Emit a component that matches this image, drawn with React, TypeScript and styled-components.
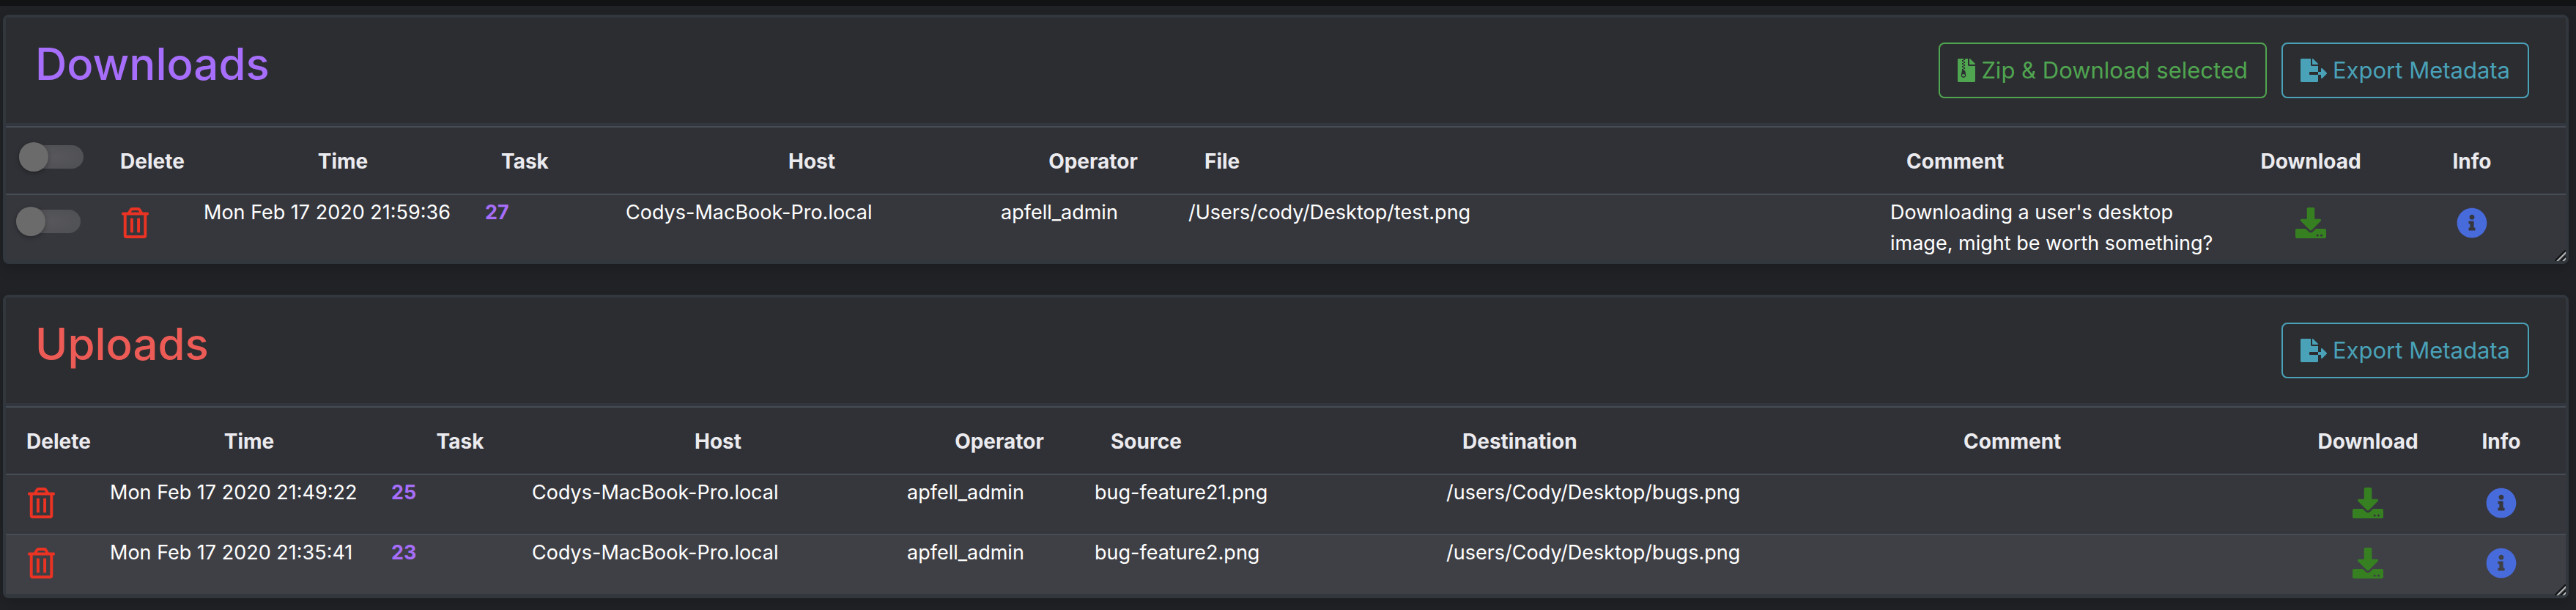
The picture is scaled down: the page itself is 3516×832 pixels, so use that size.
import React from "react";
import styled, { createGlobalStyle } from "styled-components";
import { FaDownload, FaFileArchive, FaFileExport, FaInfoCircle, FaRegTrashAlt } from "react-icons/fa";

const GlobalStyle = createGlobalStyle`
  *, *::before, *::after { box-sizing: border-box; }
  body {
    margin: 0;
    background: #202225;
    color: #fff;
    font-family: Inter, "Liberation Sans", sans-serif;
    font-size: 27px;
    line-height: 42px;
  }
`;

const TopStrip = styled.div`
  height: 8px;
  background: #121315;
`;

const Page = styled.main`
  display: flex;
  flex-direction: column;
  gap: 42px;
  padding: 12px 10px 16px 4px;
`;

const Card = styled.section`
  position: relative;
  padding-bottom: 2px;
  border: 4px solid #32373e;
  border-radius: 8px;
  background: #32383c;
  box-shadow: 0 8px 16px rgba(0, 0, 0, 0.15);
`;

const CardHeader = styled.header`
  display: flex;
  align-items: flex-start;
  justify-content: space-between;
  padding: 34px 50px 34px 40px;
  border-bottom: 4px solid #32373f;
  background: #2c2d31;
`;

const Title = styled.h1<{ $color: string }>`
  margin: 0;
  color: ${(p) => p.$color};
  font-size: 60px;
  font-weight: 500;
  line-height: 58px;
`;

const Actions = styled.div`
  display: flex;
  gap: 20px;
`;

const OutlineButton = styled.button<{ $color: string; $iconWidth: number }>`
  display: flex;
  align-items: center;
  gap: 8px;
  height: 76px;
  padding: 0 24px;
  border: 2px solid ${(p) => p.$color};
  border-radius: 8px;
  background: transparent;
  color: ${(p) => p.$color};
  font: inherit;
  font-size: 31px;
  white-space: nowrap;
  cursor: pointer;

  svg {
    width: ${(p) => p.$iconWidth}px;
    height: 32px;
  }
`;

const Table = styled.table`
  width: 100%;
  table-layout: fixed;
  border-collapse: separate;
  border-spacing: 0;
`;

const Col = styled.col<{ $width?: number }>`
  width: ${(p) => (p.$width ? `${p.$width}px` : "auto")};
`;

const HeadCell = styled.th<{ $align?: "left" | "center" }>`
  height: 92px;
  padding: ${(p) => (p.$align === "left" ? "2px 20px 0 28px" : "2px 12px 0 20px")};
  border-top: 2px solid #454b53;
  background: #303136;
  color: #ebebef;
  font-size: 28px;
  font-weight: 700;
  text-align: ${(p) => p.$align ?? "center"};
`;

const ToggleHeadCell = styled(HeadCell)`
  padding: 0 0 10px 18px;
  text-align: left;
`;

const Row = styled.tr`
  background: #36373d;

  &:nth-child(even) {
    background: #3f4046;
  }
`;

const Cell = styled.td`
  padding: 3px 6px 1px;
  border-top: 2px solid #454d55;
  vertical-align: top;
`;

const CommentCell = styled(Cell)`
  padding-right: 32px;
`;

const ToggleCell = styled(Cell)`
  padding: 16px 0 0 14px;
`;

const IconCell = styled(Cell)`
  padding: 3px 20px 1px 28px;
  text-align: center;
`;

const DeleteCell = styled(Cell)`
  padding-left: 30px;
`;

const IconButton = styled.button<{ $color: string; $iconWidth: number }>`
  display: inline-block;
  padding: 14px 0 20px;
  border: 0;
  background: none;
  color: ${(p) => p.$color};
  line-height: 0;
  vertical-align: top;
  cursor: pointer;

  svg {
    width: ${(p) => p.$iconWidth}px;
    height: 42px;
  }
`;

const TaskLink = styled.a`
  color: #a66efa;
  font-weight: 700;
  text-decoration: none;
`;

const Toggle = styled.input`
  appearance: none;
  display: grid;
  align-items: center;
  width: 88px;
  height: 40px;
  margin: 0;
  cursor: pointer;

  &::before,
  &::after {
    content: "";
    grid-area: 1 / 1;
  }

  &::before {
    height: 32px;
    border-radius: 16px;
    background: radial-gradient(ellipse at center, #58585c, #4e4f53);
  }

  &::after {
    width: 40px;
    height: 40px;
    border-radius: 50%;
    background: #6b6b6b;
    box-shadow: 0 2px 6px rgba(0, 0, 0, 0.3);
  }

  &:checked::after {
    justify-self: end;
  }
`;

const Grip = styled.svg`
  position: absolute;
  right: 0;
  bottom: 0;
  width: 15px;
  height: 15px;
`;

const ResizeGrip = () => (
  <Grip viewBox="0 0 15 15" aria-hidden="true">
    <path d="M0.5 15L15 0.5M8.5 15L15 8.5" stroke="#111214" strokeWidth="2.4" />
    <path d="M3 15.5L15.5 3M11 15.5L15.5 11" stroke="#b9b9b9" strokeWidth="2" />
  </Grip>
);

const ExportButton = () => (
  <OutlineButton type="button" $color="#49a2b8" $iconWidth={36}>
    <FaFileExport />
    Export Metadata
  </OutlineButton>
);

const DeleteButton = () => (
  <IconButton type="button" $color="#ea3323" $iconWidth={37} aria-label="Delete">
    <FaRegTrashAlt />
  </IconButton>
);

const DownloadButton = () => (
  <IconButton type="button" $color="#368021" $iconWidth={42} aria-label="Download">
    <FaDownload />
  </IconButton>
);

const InfoButton = () => (
  <IconButton type="button" $color="#486bdb" $iconWidth={42} aria-label="Info">
    <FaInfoCircle />
  </IconButton>
);

const downloads = [
  {
    time: "Mon Feb 17 2020 21:59:36",
    task: 27,
    host: "Codys-MacBook-Pro.local",
    operator: "apfell_admin",
    file: "/Users/cody/Desktop/test.png",
    comment: "Downloading a user's desktop image, might be worth something?",
  },
];

const uploads = [
  {
    time: "Mon Feb 17 2020 21:49:22",
    task: 25,
    host: "Codys-MacBook-Pro.local",
    operator: "apfell_admin",
    source: "bug-feature21.png",
    destination: "/users/Cody/Desktop/bugs.png",
    comment: "",
  },
  {
    time: "Mon Feb 17 2020 21:35:41",
    task: 23,
    host: "Codys-MacBook-Pro.local",
    operator: "apfell_admin",
    source: "bug-feature2.png",
    destination: "/users/Cody/Desktop/bugs.png",
    comment: "",
  },
];

const DownloadsCard = () => (
  <Card>
    <CardHeader>
      <Title $color="#a66efa">Downloads</Title>
      <Actions>
        <OutlineButton type="button" $color="#50a550" $iconWidth={24}>
          <FaFileArchive />
          Zip &amp; Download selected
        </OutlineButton>
        <ExportButton />
      </Actions>
    </CardHeader>
    <Table>
      <colgroup>
        <Col $width={128} />
        <Col $width={136} />
        <Col $width={384} />
        <Col $width={192} />
        <Col $width={512} />
        <Col $width={256} />
        <Col />
        <Col $width={488} />
        <Col $width={176} />
        <Col $width={264} />
      </colgroup>
      <thead>
        <tr>
          <ToggleHeadCell>
            <Toggle type="checkbox" aria-label="Select all downloads" />
          </ToggleHeadCell>
          <HeadCell>Delete</HeadCell>
          <HeadCell>Time</HeadCell>
          <HeadCell $align="left">Task</HeadCell>
          <HeadCell>Host</HeadCell>
          <HeadCell>Operator</HeadCell>
          <HeadCell $align="left">File</HeadCell>
          <HeadCell $align="left">Comment</HeadCell>
          <HeadCell>Download</HeadCell>
          <HeadCell>Info</HeadCell>
        </tr>
      </thead>
      <tbody>
        {downloads.map((d) => (
          <Row key={d.task}>
            <ToggleCell>
              <Toggle type="checkbox" aria-label={`Select ${d.file}`} />
            </ToggleCell>
            <DeleteCell><DeleteButton /></DeleteCell>
            <Cell>{d.time}</Cell>
            <Cell><TaskLink href="#task">{d.task}</TaskLink></Cell>
            <Cell>{d.host}</Cell>
            <Cell>{d.operator}</Cell>
            <Cell>{d.file}</Cell>
            <CommentCell>{d.comment}</CommentCell>
            <IconCell><DownloadButton /></IconCell>
            <IconCell><InfoButton /></IconCell>
          </Row>
        ))}
      </tbody>
    </Table>
    <ResizeGrip />
  </Card>
);

const UploadsCard = () => (
  <Card>
    <CardHeader>
      <Title $color="#ed5b56">Uploads</Title>
      <Actions>
        <ExportButton />
      </Actions>
    </CardHeader>
    <Table>
      <colgroup>
        <Col $width={136} />
        <Col $width={384} />
        <Col $width={192} />
        <Col $width={512} />
        <Col $width={256} />
        <Col $width={480} />
        <Col />
        <Col $width={486} />
        <Col $width={180} />
        <Col $width={184} />
      </colgroup>
      <thead>
        <tr>
          <HeadCell>Delete</HeadCell>
          <HeadCell>Time</HeadCell>
          <HeadCell>Task</HeadCell>
          <HeadCell>Host</HeadCell>
          <HeadCell>Operator</HeadCell>
          <HeadCell $align="left">Source</HeadCell>
          <HeadCell $align="left">Destination</HeadCell>
          <HeadCell $align="left">Comment</HeadCell>
          <HeadCell>Download</HeadCell>
          <HeadCell>Info</HeadCell>
        </tr>
      </thead>
      <tbody>
        {uploads.map((u) => (
          <Row key={u.task}>
            <DeleteCell><DeleteButton /></DeleteCell>
            <Cell>{u.time}</Cell>
            <Cell><TaskLink href="#task">{u.task}</TaskLink></Cell>
            <Cell>{u.host}</Cell>
            <Cell>{u.operator}</Cell>
            <Cell>{u.source}</Cell>
            <Cell>{u.destination}</Cell>
            <CommentCell>{u.comment}</CommentCell>
            <IconCell><DownloadButton /></IconCell>
            <IconCell><InfoButton /></IconCell>
          </Row>
        ))}
      </tbody>
    </Table>
    <ResizeGrip />
  </Card>
);

export default function App() {
  return (
    <>
      <GlobalStyle />
      <TopStrip />
      <Page>
        <DownloadsCard />
        <UploadsCard />
      </Page>
    </>
  );
}
